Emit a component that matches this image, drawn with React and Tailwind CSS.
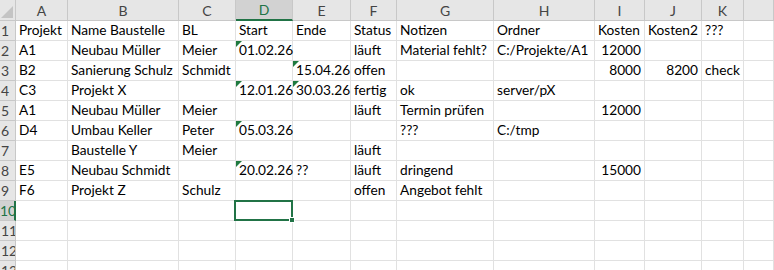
import React from "react";

const COLS = ["A","B","C","D","E","F","G","H","I","J","K",""];
const DATA = [
  ["Projekt","Name Baustelle","BL","Start","Ende","Status","Notizen","Ordner","Kosten","Kosten2","???"],
  ["A1","Neubau Müller","Meier",{v:"01.02.26",tri:true},"","läuft","Material fehlt?","C:/Projekte/A1",{v:"12000",num:true},"",""],
  ["B2","Sanierung Schulz","Schmidt","",{v:"15.04.26",tri:true},"offen","","",{v:"8000",num:true},{v:"8200",num:true},"check"],
  ["C3","Projekt X","",{v:"12.01.26",tri:true},{v:"30.03.26",tri:true},"fertig","ok","server/pX","","",""],
  ["A1","Neubau Müller","Meier","","","läuft","Termin prüfen","",{v:"12000",num:true},"",""],
  ["D4","Umbau Keller","Peter",{v:"05.03.26",tri:true},"","","???","C:/tmp","","",""],
  ["","Baustelle Y","Meier","","","läuft","","","","",""],
  ["E5","Neubau Schmidt","",{v:"20.02.26",tri:true},"??","läuft","dringend","",{v:"15000",num:true},"",""],
  ["F6","Projekt Z","Schulz","","","offen","Angebot fehlt","","","",""],
  [],[],[],[],
];

const font = { fontFamily: "Lato, 'Liberation Sans', sans-serif" };

function Cell({ c, selected }) {
  const cell = typeof c === "object" && c !== null ? c : { v: c || "" };
  return (
    <div className={"relative h-full border-r border-b border-[#e1e1e1] flex items-end whitespace-nowrap overflow-visible text-[13.7px] text-black leading-none " + (cell.num ? "justify-end pr-[3px]" : "pl-[3px]")}>
      {cell.tri && (
        <span className="absolute left-0 top-0 w-0 h-0 border-t-[6px] border-r-[6px] border-t-[#1f7a3f] border-r-transparent" />
      )}
      <span className="relative pb-[3px]">{cell.v}</span>
      {selected && (
        <span className="absolute -left-[2px] -top-[1px] right-[-1px] bottom-[-1px] border-2 border-[#217346] z-10">
          <span className="absolute -right-[4px] -bottom-[4px] w-[6px] h-[6px] bg-[#217346] border border-white" />
        </span>
      )}
    </div>
  );
}

export default function App() {
  return (
    <div className="w-[774px] h-[270px] overflow-hidden bg-white" style={font}>
      <div className="grid grid-cols-[16px_52px_111px_57px_57px_58px_46px_97px_101px_50px_57px_42px_1fr] grid-rows-[21px_repeat(13,20px)]">
        <div className="relative bg-[#e6e6e6] border-r border-b border-[#c8c8c8]">
          <span className="absolute right-[2px] bottom-[2px] w-0 h-0 border-b-[12px] border-l-[12px] border-b-[#c4c4c4] border-l-transparent" />
        </div>
        {COLS.map((l, i) =>
          l === "D" ? (
            <div key={i} className="flex items-center justify-center bg-[#d2d2d2] border-r border-[#c8c8c8] border-b-2 border-b-[#217346] text-[14px] text-[#217346]">{l}</div>
          ) : (
            <div key={i} className="flex items-center justify-center bg-[#e6e6e6] border-r border-b border-[#c8c8c8] text-[14px] text-[#444444]">{l}</div>
          )
        )}
        {DATA.map((row, r) => (
          <React.Fragment key={r}>
            {r === 9 ? (
              <div className="flex items-center bg-[#d2d2d2] border-r-2 border-r-[#217346] border-b border-b-[#c8c8c8] text-[14px] text-[#217346] leading-none overflow-hidden">{r + 1}</div>
            ) : (
              <div className="flex items-center pl-[1px] bg-[#e6e6e6] border-r border-b border-[#c8c8c8] text-[14px] text-[#444444] leading-none overflow-hidden">{r + 1}</div>
            )}
            {COLS.map((_, ci) => (
              <Cell key={ci} c={row[ci]} selected={r === 9 && ci === 3} />
            ))}
          </React.Fragment>
        ))}
      </div>
    </div>
  );
}
